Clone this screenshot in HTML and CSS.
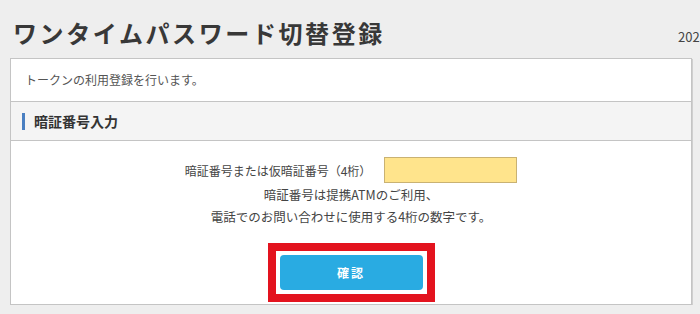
FILE: index.html
```html
<!DOCTYPE html>
<html lang="ja">
<head>
    <meta charset="UTF-8">
    <meta name="viewport" content="width=device-width, initial-scale=1.0">
    <title>ワンタイムパスワード切替登録</title>
    <link rel="stylesheet" href="styles.css">
</head>
<body>
    <div class="page">
        <div class="page-head">
            <h1 class="page-title">ワンタイムパスワード切替登録</h1>
            <div class="page-date">2023/10/01 10:00</div>
        </div>
        <div class="panel">
            <div class="panel-lead">トークンの利用登録を行います。</div>
            <h2 class="section-title">暗証番号入力</h2>
            <div class="section-body">
                <div class="pin-row">
                    <label for="pin">暗証番号または仮暗証番号（4桁）</label>
                    <input type="password" id="pin" class="pin-input" maxlength="4">
                </div>
                <p class="pin-note">暗証番号は提携ATMのご利用、<br>電話でのお問い合わせに使用する4桁の数字です。</p>
                <div class="confirm-frame">
                    <button class="confirm-button">確認</button>
                </div>
            </div>
        </div>
    </div>
</body>
</html>
```

FILE: styles.css
```css
body {
    margin: 0;
    background-color: #eeeeee;
    font-family: "Noto Sans CJK JP", "Noto Sans", sans-serif;
    color: #333;
    overflow: hidden;
}
.page {
    padding: 0 8px 0 10px;
}
.page-head {
    display: flex;
    align-items: flex-end;
    height: 34px;
    padding-top: 16px;
    margin-bottom: 8px;
}
.page-title {
    flex: 1;
    margin: 0 0 0 3px;
    font-size: 24px;
    line-height: 34px;
    font-weight: bold;
    letter-spacing: 2.6px;
    color: #383838;
}
.page-date {
    width: 22px;
    margin-right: -8px;
    overflow: hidden;
    white-space: nowrap;
    font-size: 13px;
    line-height: 26px;
    color: #444;
}
.panel {
    background-color: #fff;
    border: 1px solid #c4c4c4;
    box-shadow: 1px 1px 0 #cfcfcf;
}
.panel-lead {
    height: 42px;
    line-height: 42px;
    padding: 0 14px;
    font-size: 12px;
    color: #555;
    border-bottom: 1px solid #c4c4c4;
}
.section-title {
    display: flex;
    align-items: center;
    height: 38px;
    margin: 0;
    padding-left: 11px;
    background-color: #f4f4f4;
    border-bottom: 1px solid #c4c4c4;
    font-size: 14px;
    font-weight: bold;
    color: #333;
}
.section-title::before {
    content: "";
    width: 3px;
    height: 17px;
    margin-right: 9px;
    background-color: #4a7fc1;
}
.section-body {
    display: flex;
    flex-direction: column;
    align-items: center;
    padding: 16px 0 2px;
}
.pin-row {
    display: flex;
    align-items: center;
    gap: 13px;
    font-size: 12px;
    color: #444;
}
.pin-input {
    box-sizing: border-box;
    width: 133px;
    height: 26px;
    margin: 0;
    background-color: #ffe48c;
    border: 1px solid #c9b273;
}
.pin-note {
    margin: 1px 0 0;
    font-size: 12.5px;
    line-height: 22px;
    text-align: center;
    color: #444;
}
.confirm-frame {
    margin-top: 15px;
    padding: 4px;
    border: 8px solid #e3131e;
}
.confirm-button {
    display: block;
    width: 143px;
    height: 35px;
    border: none;
    border-radius: 4px;
    background-color: #29abe2;
    color: #fff;
    font-family: inherit;
    font-size: 12px;
    font-weight: bold;
    letter-spacing: 2px;
    cursor: pointer;
}
```
